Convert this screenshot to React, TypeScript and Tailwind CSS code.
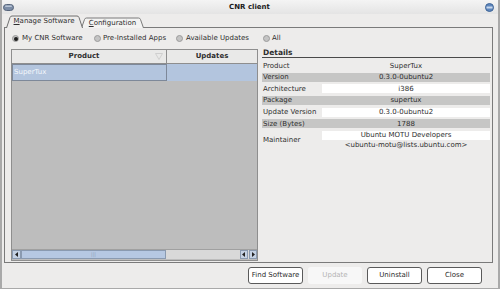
import React from "react";

function Radio({ checked }: { checked?: boolean }) {
  return (
    <span className="w-[7px] h-[7px] rounded-full border border-[#9c9c9c] bg-[#c4c4c4] flex items-center justify-center">
      {checked && <span className="w-[4px] h-[4px] rounded-full bg-[#1e1e1e]" />}
    </span>
  );
}

function Btn({ label, disabled }: { label: string; disabled?: boolean }) {
  return (
    <div
      className={
        disabled
          ? "w-[54px] h-[17px] rounded-[3px] bg-[#f7f7f7] text-[#b4b4b4] flex items-center justify-center"
          : "w-[55px] h-[17px] rounded-[3px] border border-[#5a5a5a] bg-white text-[#2a2a2a] flex items-center justify-center"
      }
    >
      {label}
    </div>
  );
}

const details: { label: string; value: string; gray?: boolean }[] = [
  { label: "Product", value: "SuperTux" },
  { label: "Version", value: "0.3.0-0ubuntu2", gray: true },
  { label: "Architecture", value: "i386" },
  { label: "Package", value: "supertux", gray: true },
  { label: "Update Version", value: "0.3.0-0ubuntu2" },
  { label: "Size (Bytes)", value: "1788", gray: true },
];

export default function App() {
  return (
    <div className="w-[500px] h-[289px] bg-[#edeceb] border-x-2 border-b border-[#a9a9a9] flex flex-col font-['DejaVu_Sans',sans-serif] text-[7px] text-[#2e2e2e] overflow-hidden">
      {/* Title bar */}
      <div className="h-[14px] flex items-center justify-between px-[1px] bg-gradient-to-b from-[#f4f4f4] to-[#e4e4e4]">
        <svg width="11" height="7" viewBox="0 0 11 7">
          <rect x="0.5" y="0.5" width="10" height="6" rx="3" fill="#7b8ca6" stroke="#56647a" />
          <rect x="2" y="1.5" width="7" height="1.5" rx="0.75" fill="#b9c5d6" />
        </svg>
        <span className="font-bold text-[7px] text-[#1a1a1a]">CNR client</span>
        <svg width="9" height="9" viewBox="0 0 9 9" className="mr-[3px]">
          <circle cx="4.5" cy="4.5" r="4" fill="#5d86bd" stroke="#3f6596" />
          <rect x="1.5" y="3.5" width="6" height="2" fill="#c9d8ec" />
        </svg>
      </div>

      {/* Tabs */}
      <div className="h-[13px] flex items-end pl-[3px]">
        <div className="relative w-[78px] h-[12px] flex items-center justify-center z-10">
          <svg className="absolute inset-0" width="78" height="13" viewBox="0 0 78 13">
            <path d="M1.5 13 L5 2.5 Q5.5 1 7 1 L72 1 Q73.5 1 74 2.5 L77.5 13" fill="#edeceb" stroke="#6e6e6e" />
          </svg>
          <span className="relative pt-[1px]">
            <span className="underline">M</span>anage Software
          </span>
        </div>
        <div className="relative w-[63px] h-[10px] -ml-[2px] flex items-center justify-center">
          <svg className="absolute inset-0" width="63" height="11" viewBox="0 0 63 11">
            <path d="M0.5 11 L3.5 2.5 Q4 1 5.5 1 L57.5 1 Q59 1 59.5 2.5 L62.5 11" fill="#f3f3f2" stroke="#7a7a7a" />
          </svg>
          <span className="relative pt-[2px]">
            <span className="underline">C</span>onfiguration
          </span>
        </div>
      </div>

      {/* Pane */}
      <div className="ml-[2px] mr-[5px] h-[236px] border border-[#7a7a7a] flex flex-col pl-[6px] pr-[1px]">
        <div className="h-[19px] flex items-center pl-[1px] pt-[2px]">
          <div className="flex items-center gap-[3px] w-[82px]">
            <Radio checked />
            <span>My CNR Software</span>
          </div>
          <div className="flex items-center gap-[2px] w-[82px]">
            <Radio />
            <span>Pre-Installed Apps</span>
          </div>
          <div className="flex items-center gap-[3px] w-[87px]">
            <Radio />
            <span>Available Updates</span>
          </div>
          <div className="flex items-center gap-[2px]">
            <Radio />
            <span>All</span>
          </div>
        </div>

        <div className="flex gap-[4px] pt-[2px]">
          {/* Table */}
          <div className="w-[247px] h-[212px] border border-[#8e8e8e] bg-[#bdbdbd] flex flex-col">
            <div className="h-[14px] flex bg-[#e9e9e8] border-b border-[#8e8e8e] font-bold">
              <div className="relative w-[155px] border-r border-[#8e8e8e] flex items-center justify-center pr-[10px]">
                Product
                <svg className="absolute right-[3px] top-[3px]" width="8" height="7" viewBox="0 0 8 7">
                  <path d="M0.5 0.5 L7.5 0.5 L4 6.5 Z" fill="none" stroke="#cfcfcf" />
                </svg>
              </div>
              <div className="flex-1 flex items-center justify-center">Updates</div>
            </div>
            <div className="h-[17px] flex bg-[#b3c5de]">
              <div className="w-[155px] border border-[#7d8899] flex items-center pl-[1px] text-[#f4f7fb]">SuperTux</div>
              <div className="flex-1" />
            </div>
            <div className="flex-1" />
            <div className="h-[10px] flex items-center bg-[#d9d9d9] border-t border-[#a0a0a0] mb-[1px]">
              <div className="w-[9px] h-[9px] flex items-center justify-center border border-[#8a9ab0] bg-[#c5d2e4]">
                <svg width="4" height="5" viewBox="0 0 4 5"><path d="M3 0 L0 2.5 L3 5 Z" fill="#222" /></svg>
              </div>
              <div className="w-[145px] h-[9px] bg-[#b6c8e2] border border-[#8a9ab0] flex items-center justify-center text-[#8ea0ba] text-[5px]">
                |||
              </div>
              <div className="flex-1" />
              <div className="w-[8px] h-[9px] flex items-center justify-center border border-[#8a9ab0] bg-[#c5d2e4]">
                <svg width="4" height="5" viewBox="0 0 4 5"><path d="M3 0 L0 2.5 L3 5 Z" fill="#222" /></svg>
              </div>
              <div className="w-[8px] h-[9px] flex items-center justify-center border border-[#8a9ab0] bg-[#c5d2e4] ml-[1px]">
                <svg width="4" height="5" viewBox="0 0 4 5"><path d="M1 0 L4 2.5 L1 5 Z" fill="#222" /></svg>
              </div>
            </div>
          </div>

          {/* Details */}
          <div className="flex-1 flex flex-col">
            <div className="h-[8px] flex items-end font-bold text-[7.5px] leading-[8px] pl-[1px]">Details</div>
            <div className="h-[1px] bg-[#4a4a4a] mt-[0px] mb-[2px]" />
            {details.map((d) => (
              <div key={d.label} className="h-[11.6px] flex items-center pr-[1px]">
                <div className={d.gray ? "h-[9px] w-full flex items-center bg-[#c6c6c5]" : "h-[9px] w-full flex items-center"}>
                  <div className="w-[60px] pl-[1px]">{d.label}</div>
                  <div className={d.gray ? "flex-1 h-full flex items-center justify-center" : d.label === "Product" ? "flex-1 h-full flex items-center justify-center" : "flex-1 h-full flex items-center justify-center bg-white"}>
                    {d.value}
                  </div>
                </div>
              </div>
            ))}
            <div className="flex mt-[1px] pr-[1px]">
              <div className="w-[60px] pl-[1px] flex items-center">Maintainer</div>
              <div className="flex-1 flex flex-col">
                <div className="h-[9px] bg-white flex items-center justify-center">Ubuntu MOTU Developers</div>
                <div className="h-[11px] flex items-center justify-center">&lt;ubuntu-motu@lists.ubuntu.com&gt;</div>
              </div>
            </div>
          </div>
        </div>
      </div>

      {/* Buttons */}
      <div className="flex-1 flex items-center justify-end gap-[5px] pr-[16px] pb-[1px]">
        <Btn label="Find Software" />
        <Btn label="Update" disabled />
        <Btn label="Uninstall" />
        <Btn label="Close" />
      </div>
    </div>
  );
}
